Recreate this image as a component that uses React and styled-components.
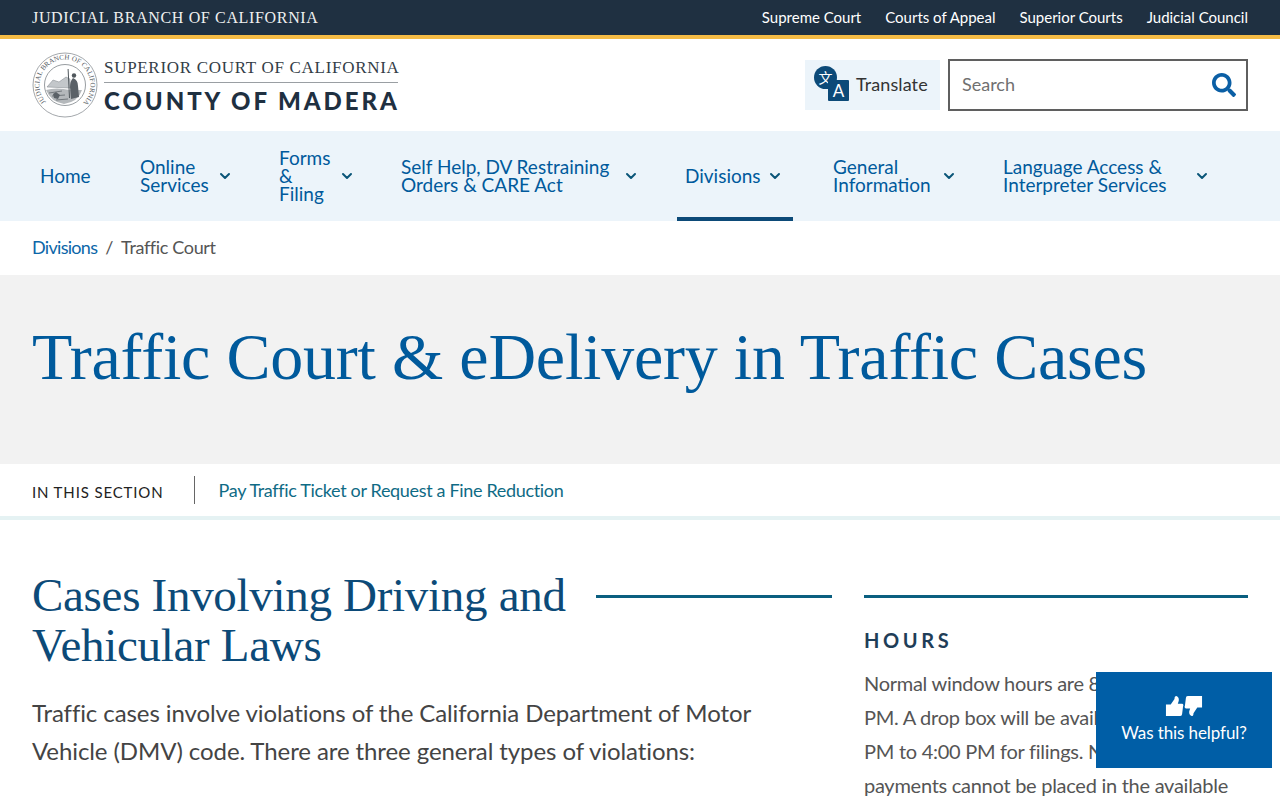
import React from 'react';
import styled, { createGlobalStyle } from 'styled-components';
import { FaSearch } from 'react-icons/fa';
import { ChevronDown } from 'lucide-react';

const GlobalStyle = createGlobalStyle`
  html, body {
    margin: 0;
    padding: 0;
    background: #fff;
    font-family: Lato, "Liberation Sans", sans-serif;
  }
`;

const Page = styled.div`
  width: 1280px;
  height: 800px;
  overflow: hidden;
  position: relative;
`;

const TopBar = styled.div`
  height: 35px;
  background: #1f3041;
  border-bottom: 4px solid #f5bb45;
  display: flex;
  align-items: center;
  justify-content: space-between;
  padding: 0 32px;
`;

const Branch = styled.a`
  font-family: "Liberation Serif", serif;
  font-size: 16px;
  letter-spacing: 0.66px;
  color: #f0f0f0;
`;

const TopLinks = styled.div`
  display: flex;
  gap: 24px;
  padding-bottom: 2px;
`;

const TopLink = styled.a`
  font-size: 15px;
  letter-spacing: -0.01px;
  color: #fff;
`;

const Header = styled.header`
  height: 92px;
  display: flex;
  align-items: center;
  justify-content: space-between;
  padding: 0 32px;
`;

const Logo = styled.div`
  display: flex;
  align-items: center;
  gap: 6px;
`;

const LogoText = styled.div`
  display: flex;
  flex-direction: column;
  width: 294px;
  padding-top: 5px;
`;

const CourtName = styled.div`
  font-family: "Liberation Serif", serif;
  font-size: 17px;
  line-height: 22px;
  letter-spacing: 0.7px;
  color: #333d47;
  white-space: nowrap;
  border-bottom: 1px solid #9a9fa3;
  padding-bottom: 3px;
`;

const CountyName = styled.div`
  font-size: 24px;
  font-weight: 900;
  line-height: 35px;
  letter-spacing: 2.95px;
  color: #1f3041;
  white-space: nowrap;
`;

const HeaderTools = styled.div`
  display: flex;
  align-items: center;
  gap: 8px;
`;

const TranslateButton = styled.button`
  width: 135px;
  height: 50px;
  border: none;
  background: #ecf4fa;
  display: flex;
  align-items: center;
  gap: 6px;
  padding: 0 0 2px 9px;
  font-family: inherit;
  font-size: 18px;
  letter-spacing: 0.1px;
  color: #333;
`;

const SearchBox = styled.div`
  width: 300px;
  height: 52px;
  box-sizing: border-box;
  border: 2px solid #5f5f5f;
  display: flex;
  align-items: center;
  justify-content: space-between;
  padding: 0 10px 0 12px;
  color: #0b5fa5;
`;

const SearchInput = styled.input`
  border: none;
  outline: none;
  flex: 1;
  font-family: inherit;
  font-size: 18px;
  padding: 0 0 2px;
  &::placeholder {
    color: #707070;
    opacity: 1;
  }
`;

const Nav = styled.nav`
  height: 90px;
  background: #ecf4fa;
  display: flex;
  gap: 32px;
  padding: 0 32px;
`;

const NavItem = styled.a`
  display: flex;
  align-items: center;
  gap: 8px;
  padding: 0 ${(p) => (p.$active ? 12 : 8)}px 0 8px;
  position: relative;
  font-size: 19px;
  line-height: 18px;
  color: #005a9c;
  &::after {
    content: '';
    display: ${(p) => (p.$active ? 'block' : 'none')};
    position: absolute;
    left: 0;
    right: 0;
    bottom: 0;
    height: 4px;
    background: #0c4a78;
  }
`;

const NavLabel = styled.span`
  display: block;
  width: ${(p) => p.$width}px;
  white-space: nowrap;
`;

const NavChevron = styled(ChevronDown)`
  width: 16px;
  height: 16px;
  margin: 0 -2px;
  color: #0a5578;
  flex-shrink: 0;
`;

const Breadcrumb = styled.div`
  height: 54px;
  box-sizing: border-box;
  padding: 0 32px 2px;
  display: flex;
  align-items: center;
  font-size: 18px;
  letter-spacing: -0.35px;
  color: #555;
`;

const Crumb = styled.a`
  letter-spacing: -0.7px;
  color: #0b66a8;
`;

const CrumbSep = styled.span`
  margin: 0 8px;
  color: #555;
`;

const Hero = styled.div`
  height: 189px;
  background: #f2f2f2;
  padding: 44px 32px 0;
  box-sizing: border-box;
`;

const Title = styled.h1`
  margin: 0;
  font-family: "Liberation Serif", serif;
  font-weight: 400;
  font-size: 66px;
  line-height: 76px;
  letter-spacing: -0.22px;
  color: #005a9c;
  white-space: nowrap;
`;

const SectionNav = styled.div`
  height: 52px;
  border-bottom: 4px solid #e5f2f3;
  display: flex;
  align-items: center;
  padding: 0 32px;
`;

const SectionLabel = styled.span`
  font-size: 15px;
  letter-spacing: 0.86px;
  color: #222;
  padding-right: 30px;
  margin-top: 4px;
`;

const SectionLink = styled.a`
  height: 28px;
  display: flex;
  align-items: center;
  border-left: 1px solid #666;
  padding-left: 24px;
  font-size: 18px;
  letter-spacing: -0.33px;
  color: #0f6b85;
`;

const Content = styled.div`
  display: grid;
  grid-template-columns: 800px 384px;
  gap: 32px;
  padding: 50px 32px 0;
`;

const HeadingRow = styled.div`
  display: flex;
  align-items: flex-start;
  gap: 24px;
  margin-bottom: 24px;
`;

const Heading = styled.h2`
  margin: 0;
  width: 540px;
  flex-shrink: 0;
  font-family: "Liberation Serif", serif;
  font-weight: 400;
  font-size: 47px;
  line-height: 50px;
  letter-spacing: -0.3px;
  color: #0c4a78;
`;

const Rule = styled.div`
  flex: 1;
  height: 3px;
  margin-top: 25px;
  background: #0a5f80;
`;

const Lead = styled.p`
  margin: 0;
  max-width: 740px;
  font-size: 24px;
  line-height: 38px;
  letter-spacing: -0.09px;
  color: #444;
`;

const SideTitle = styled.h3`
  margin: 28px 0 12px;
  font-size: 20px;
  line-height: 28px;
  font-weight: 700;
  letter-spacing: 3.6px;
  color: #1f3e58;
`;

const SideText = styled.p`
  margin: 0;
  font-size: 20px;
  line-height: 34px;
  letter-spacing: -0.27px;
  color: #555;
`;

const Helpful = styled.button`
  position: absolute;
  left: 1096px;
  top: 672px;
  width: 176px;
  height: 96px;
  border: none;
  background: #005ea6;
  color: #fff;
  font-family: inherit;
  font-size: 17px;
  letter-spacing: -0.1px;
  display: flex;
  flex-direction: column;
  align-items: center;
  justify-content: center;
  gap: 5px;
  padding: 0 0 3px;
`;

const Thumbs = styled.span`
  display: flex;
  gap: 0;
`;

const Seal = () => (
  <svg width="66" height="66" viewBox="0 0 66 66">
    <defs>
      <path id="sealRing" d="M14 50 A25.5 25.5 0 1 1 52 50" />
    </defs>
    <circle cx="33" cy="33" r="32" fill="#fff" stroke="#8b9195" strokeWidth="0.8" />
    <circle cx="33" cy="33" r="20.5" fill="none" stroke="#6b7278" strokeWidth="0.7" />
    <text fontFamily="Liberation Serif, serif" fontSize="7" fill="#555c62">
      <textPath href="#sealRing" textLength="118">JUDICIAL BRANCH OF CALIFORNIA</textPath>
    </text>
    <path d="M15 35 L21 28 L27 30 L34 25 L38 27 L38 36 Z" fill="#c3c7ca" stroke="#7d8388" strokeWidth="0.5" />
    <path d="M14 38 Q24 35 38 38 L50 38 Q46 50 32 52 Q19 50 14 38 Z" fill="#b4b8bb" />
    <path d="M17 41 L30 39 M20 44 L33 43 M24 48 L36 47" stroke="#5f666b" strokeWidth="0.8" />
    <path d="M35.6 17 L36.6 17 L38 46 L37 46 Z" fill="#50575c" />
    <path d="M41 26 Q46 28 46 34 L47 45 L39 47 L38 35 Q38 29 41 26 Z" fill="#5a6167" />
    <circle cx="42" cy="23.5" r="2.2" fill="#50575c" />
    <path d="M21 42 l3 -2 l4 3 l-2 4 l-4 -1 Z" fill="#5a6167" />
  </svg>
);

const TranslateIcon = () => (
  <svg width="36" height="36" viewBox="0 0 36 36">
    <circle cx="11.5" cy="11.5" r="11.5" fill="#0c4a78" />
    <text x="11.5" y="16.5" textAnchor="middle" fontFamily="Noto Sans CJK SC, sans-serif" fontSize="14" fill="#fff">文</text>
    <rect x="14" y="14" width="21" height="21" rx="1" fill="#0c4a78" />
    <text x="24.5" y="31" textAnchor="middle" fontFamily="Lato, sans-serif" fontSize="17" fill="#fff">A</text>
  </svg>
);

const thumbPath = 'M1 10 H6 L10 4 Q10 1 12 1 Q15 2 14.5 6 L13.5 9 H18 Q20 9.5 19 12 L18 20 Q18 22 16 22 H1 Z';

const ThumbUp = () => (
  <svg width="19" height="22" viewBox="0 0 20 23">
    <path d={thumbPath} fill="#fff" />
  </svg>
);

const ThumbDown = () => (
  <svg width="19" height="22" viewBox="0 0 20 23">
    <path d={thumbPath} fill="#fff" transform="rotate(180 10 11.5)" />
  </svg>
);

const navItems = [
  { label: ['Home'], width: 52 },
  { label: ['Online', 'Services'], width: 71, menu: true },
  { label: ['Forms', '&', 'Filing'], width: 54, menu: true },
  { label: ['Self Help, DV Restraining', 'Orders & CARE Act'], width: 216, menu: true },
  { label: ['Divisions'], width: 76, menu: true, active: true },
  { label: ['General', 'Information'], width: 102, menu: true },
  { label: ['Language Access &', 'Interpreter Services'], width: 185, menu: true },
];

function App() {
  return (
    <Page>
      <GlobalStyle />
      <TopBar>
        <Branch>JUDICIAL BRANCH OF CALIFORNIA</Branch>
        <TopLinks>
          <TopLink>Supreme Court</TopLink>
          <TopLink>Courts of Appeal</TopLink>
          <TopLink>Superior Courts</TopLink>
          <TopLink>Judicial Council</TopLink>
        </TopLinks>
      </TopBar>

      <Header>
        <Logo>
          <Seal />
          <LogoText>
            <CourtName>SUPERIOR COURT OF CALIFORNIA</CourtName>
            <CountyName>COUNTY OF MADERA</CountyName>
          </LogoText>
        </Logo>
        <HeaderTools>
          <TranslateButton>
            <TranslateIcon />
            Translate
          </TranslateButton>
          <SearchBox>
            <SearchInput placeholder="Search" />
            <FaSearch size={24} />
          </SearchBox>
        </HeaderTools>
      </Header>

      <Nav>
        {navItems.map((item) => (
          <NavItem key={item.label[0]} $active={item.active}>
            <NavLabel $width={item.width}>
              {item.label.map((line) => (
                <div key={line}>{line}</div>
              ))}
            </NavLabel>
            {item.menu && <NavChevron strokeWidth={3} />}
          </NavItem>
        ))}
      </Nav>

      <Breadcrumb>
        <Crumb>Divisions</Crumb>
        <CrumbSep>/</CrumbSep>
        Traffic Court
      </Breadcrumb>

      <Hero>
        <Title>Traffic Court &amp; eDelivery in Traffic Cases</Title>
      </Hero>

      <SectionNav>
        <SectionLabel>IN THIS SECTION</SectionLabel>
        <SectionLink>Pay Traffic Ticket or Request a Fine Reduction</SectionLink>
      </SectionNav>

      <Content>
        <main>
          <HeadingRow>
            <Heading>Cases Involving Driving and Vehicular Laws</Heading>
            <Rule />
          </HeadingRow>
          <Lead>
            Traffic cases involve violations of the California Department of Motor
            Vehicle (DMV) code. There are three general types of violations:
          </Lead>
        </main>
        <aside>
          <Rule />
          <SideTitle>HOURS</SideTitle>
          <SideText>
            Normal window hours are 8:00 AM to 4:00
            <br />
            PM. A drop box will be available from 4:00
            <br />
            PM to 4:00 PM for filings. No cash
            <br />
            payments cannot be placed in the available
          </SideText>
        </aside>
      </Content>

      <Helpful>
        <Thumbs>
          <ThumbUp />
          <ThumbDown />
        </Thumbs>
        Was this helpful?
      </Helpful>
    </Page>
  );
}

export default App;
